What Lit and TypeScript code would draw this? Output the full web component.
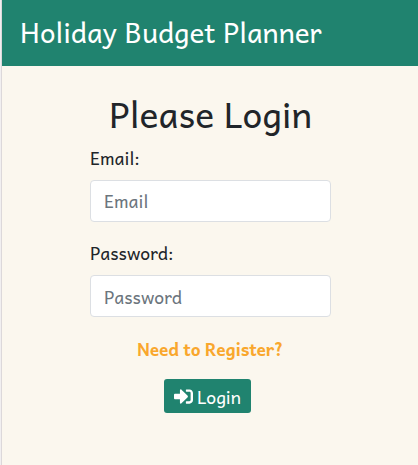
import { LitElement, html, css } from "lit";
import { customElement } from "lit/decorators.js";

@customElement("app-root")
class AppRoot extends LitElement {
  static styles = css`
    :host {
      display: block;
      box-sizing: border-box;
      height: 100vh;
      overflow: hidden;
      border-left: 1px solid #f1eff0;
      font-family: Andika, "Noto Sans", sans-serif;
      font-size: 17.7px;
      line-height: 27px;
      color: #212529;
    }
    * { box-sizing: border-box; }
    .page {
      height: 100%;
      border-left: 1px solid #dcd8da;
      background: #fbf7ee;
    }
    .bar {
      height: 66px;
      padding: 0 18px 3px;
      display: flex;
      align-items: center;
      background: #20836f;
      color: #fff;
      font-size: 27.8px;
      white-space: nowrap;
    }
    .form {
      width: 241px;
      margin-left: 88px;
      padding-top: 24px;
      display: flex;
      flex-direction: column;
    }
    h1 {
      margin: 0 0 7px;
      font-size: 35.5px;
      line-height: 47px;
      font-weight: 400;
      text-align: center;
      white-space: nowrap;
    }
    label { height: 27px; margin-bottom: 9px; }
    input {
      width: 100%;
      height: 42px;
      margin: 0 0 17px;
      padding: 0 13px;
      border: 1px solid #dcdfe3;
      border-radius: 4px;
      background: #fff;
      font: inherit;
      letter-spacing: inherit;
      color: #495057;
    }
    input[type="email"] { padding-bottom: 2px; }
    input::placeholder { color: #6c757d; opacity: 1; }
    .register {
      align-self: center;
      margin: 2px 1px 0 0;
      color: #f9a72d;
      font-size: 17.5px;
      font-weight: 700;
      letter-spacing: -0.25px;
      text-decoration: none;
      white-space: nowrap;
    }
    button {
      width: 87px;
      height: 34px;
      margin: 16px 0 0 74px;
      padding: 0;
      border: 0;
      border-radius: 3px;
      display: flex;
      align-items: center;
      justify-content: center;
      gap: 4px;
      background: #20836f;
      color: #fff;
      font: inherit;
    }
    svg { width: 19px; height: 19px; fill: currentColor; }
  `;

  render() {
    return html`
      <div class="page">
        <header class="bar"><span>Holiday Budget Planner</span></header>
        <main class="form">
          <h1>Please Login</h1>
          <label for="email">Email:</label>
          <input id="email" type="email" placeholder="Email" />
          <label for="password">Password:</label>
          <input id="password" type="password" placeholder="Password" />
          <a class="register">Need to Register?</a>
          <button type="button">
            <svg viewBox="0 0 512 512" aria-hidden="true">
              <path d="M416 448h-84c-6.600 0-12-5.400-12-12v-40c0-6.600 5.400-12 12-12h84c17.700 0 32-14.300 32-32V160c0-17.700-14.300-32-32-32h-84c-6.600 0-12-5.400-12-12V76c0-6.600 5.400-12 12-12h84c53 0 96 43 96 96v192c0 53-43 96-96 96zm-47-209L201 71c-15-15-41-4.500-41 17v96H24c-13.300 0-24 10.700-24 24v96c0 13.300 10.700 24 24 24h136v96c0 21.500 26 32 41 17l168-168c9.300-9.400 9.300-24.600 0-34z" />
            </svg>
            <span>Login</span>
          </button>
        </main>
      </div>
    `;
  }
}
